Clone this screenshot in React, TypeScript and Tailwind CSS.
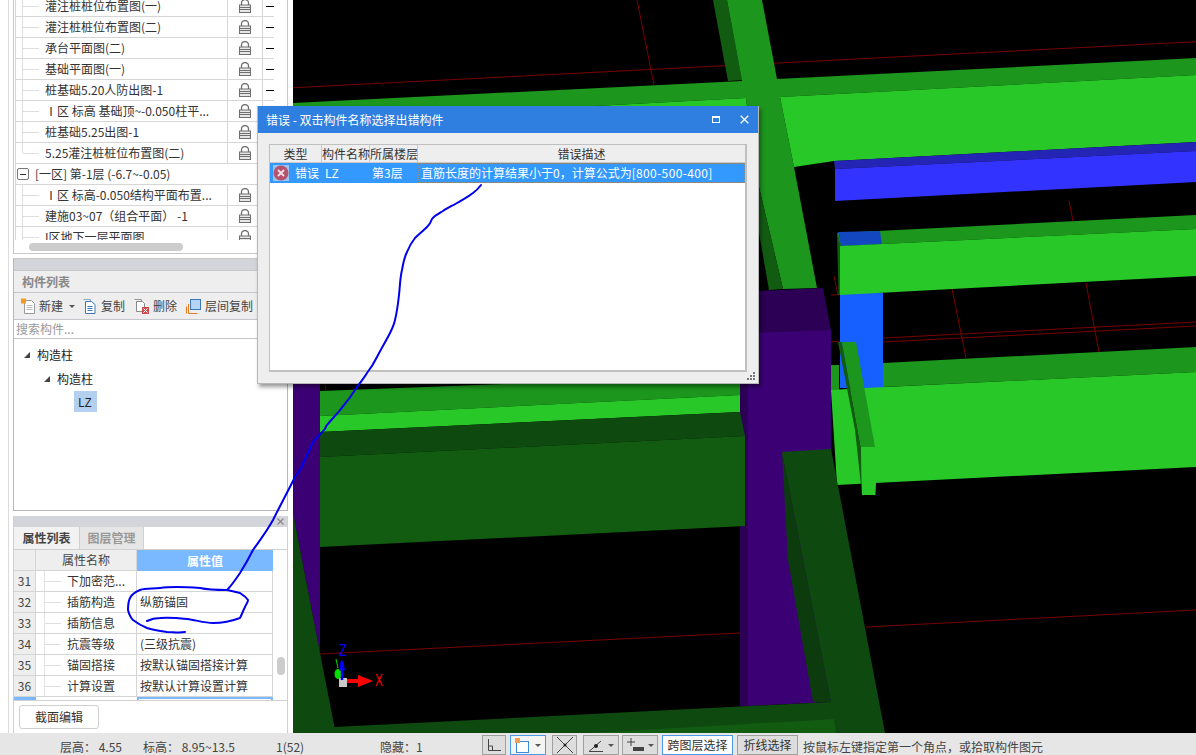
import React from "react";

const FONT = "font-['Noto_Sans_CJK_SC','Noto_Sans',sans-serif]";

const Lock = () => (
  <svg width="12" height="14" viewBox="0 0 12 14" fill="none">
    <path d="M2.500 6.500V4a3.500 3.500 0 0 1 7 0v2.500" stroke="#6f6f6f" strokeWidth="1.300" />
    <rect x="0.500" y="6" width="11" height="7.500" fill="#e6e6e6" stroke="#6f6f6f" />
    <path d="M1 8.500h10M1 10.500h10" stroke="#6f6f6f" />
  </svg>
);

const RomanOne = () => <span className="inline-block w-[12px] text-center">Ⅰ</span>;

const TreeRow = ({ text, roman, dash, last }: { text: string; roman?: boolean; dash?: boolean; last?: boolean }) => (
  <div className="flex h-[21px] w-[259px] shrink-0 items-stretch">
    <div className="flex w-[212px] items-center border-b border-l border-[#d6d6d6]">
      <div className={`${last ? "h-1/2 self-start" : "h-full"} w-[7px] border-r border-[#dedede]`} />
      <div className="h-px w-[16px] bg-[#dedede]" />
      <span className="ml-[6px] truncate whitespace-pre text-[12px] text-[#333]">
        {roman && <RomanOne />}
        {text}
      </span>
    </div>
    <div className="flex w-[35px] items-center justify-center border-b border-l border-[#d6d6d6]">
      <Lock />
    </div>
    <div className="flex w-[12px] items-center border-b border-l border-[#d6d6d6] pl-[3px]">
      {dash && <div className="h-px w-[8px] bg-black" />}
    </div>
  </div>
);

const PropRow = ({ n, name, value }: { n: number; name: string; value: string }) => (
  <div className="flex h-[21px] shrink-0 items-stretch text-[12px] text-[#333]">
    <div className="flex w-[22px] items-center justify-center border-b border-r border-[#d5d5d5] bg-[#eeeeee] text-[#444]">{n}</div>
    <div className="flex w-[101px] items-center border-b border-r border-[#d5d5d5]">
      <div className="h-full w-[9px] border-r border-[#e2e2e2]" />
      <div className="h-px w-[16px] bg-[#dedede]" />
      <span className="ml-[6px] whitespace-nowrap">{name}</span>
    </div>
    <div className="flex w-[136px] items-center border-b border-r border-[#d5d5d5] pl-[3px] whitespace-nowrap">{value}</div>
  </div>
);

const P = ({ d, c }: { d: string; c: string }) => <polygon points={d} fill={c} />;

const MID = "#1c961c";
const BRIGHT = "#28c828";
const DK = "#125c12";
const DK2 = "#0e4a0f";
const DK3 = "#0c3c0d";
const PURPLE = "#3c0075";
const PURPLE2 = "#2c0055";
const RED = "#7a0000";

const redLines = [
  [293, 87.7, 1196, 41.7],
  [637, 0, 654, 85],
  [1069, 201, 1073, 221],
  [1086, 283, 1099, 352],
  [952, 289, 966, 358],
  [883, 338, 1196, 322],
  [883, 342, 1196, 326],
  [834, 276, 838, 295],
  [831, 295, 840, 294.5],
  [831, 342, 840, 341],
  [320, 654, 740, 633],
  [866, 627, 1196, 610],
  [325, 384, 326, 390],
];

const Scene = () => (
  <svg width="903" height="733" viewBox="293 0 903 733" className="block bg-black">
    {redLines.map((l, i) => (
      <line key={i} x1={l[0]} y1={l[1]} x2={l[2]} y2={l[3]} stroke={RED} strokeWidth="1" />
    ))}
    {/* upper band + vertical beam */}
    <P d="713,0 727,0 742,80 728,81" c={DK} />
    <P d="727,0 762,0 777,79 1196,58 1196,75 780,97 794,167 817,288 783,289 759,187 746,98 595,106 293,106 293,103 742,81" c={MID} />
    <P d="595,106 746,98 747,106" c={BRIGHT} />
    <P d="759,187 783,289 769,290 759,233" c={DK} />
    <P d="780,97 1196,75 1196,142 834,161 794,167" c={BRIGHT} />
    {/* blue beam */}
    <P d="834,161 1196,142 1196,151 835,169" c="#2525b5" />
    <P d="835,169 1196,151 1196,182 835,201" c="#3333ff" />
    {/* blue column */}
    <P d="840,293 883,293 883,388 840,388" c="#1560ff" />
    {/* second beam */}
    <P d="837,233 1196,215 1196,229 840,246" c={MID} />
    <P d="838,232 880,231 882,244 841,246" c="#1247c0" />
    <P d="837,233 841,246 840,295 838.500,295" c={DK} />
    <P d="840,246 1196,229 1196,276 840,295" c={BRIGHT} />
    {/* right lower beam */}
    <P d="831,365 839,365 839,392 831,392" c={MID} />
    <P d="883,363 1196,347 1196,372 883,387" c={MID} />
    <P d="831,390 865,388 1196,372 1196,467 875,483 837,485" c={BRIGHT} />
    <P d="838,342 842,342 861,447 862,495 855,430" c={DK} />
    <P d="842,342 856,342 875,447 861,447" c={MID} />
    <P d="861,447 875,447 876,483 875.500,495 862,495" c={BRIGHT} />
    {/* purple */}
    <P d="759,291 823,288 831,330 759,333" c={PURPLE2} />
    <P d="748,333 831,330 831,702 748,706" c={PURPLE} />
    <P d="740,384 748,384 748,706 740,706" c={PURPLE2} />
    <P d="293,384 320,384 320,653 293,513" c={PURPLE} />
    {/* left beam */}
    <P d="320,391 740,375 740,395 320,416" c={MID} />
    <P d="320,416 740,395 740,412 320,432" c={BRIGHT} />
    <P d="320,432 740,412 745,436 320,457" c={DK2} />
    <P d="320,457 745,436 745,526 320,547" c={DK} />
    {/* bottom frame */}
    <P d="293,513 320,653 334.500,727 831,702 885,733 293,733" c={DK2} />
    <P d="590,733 836,719 836,733" c={DK} />
    <P d="782,452 831,449 885,733 836,733 831,702" c={DK2} />
    <P d="782,452 788,560 813,702 831,702" c={DK3} />
    {/* axis */}
    <rect x="339" y="678" width="8" height="9" fill="#c8c8c8" />
    <ellipse cx="338" cy="674" rx="3.500" ry="5" fill="#00e000" />
    <path d="M336 659l2 9" stroke="#00e000" strokeWidth="1" />
    <path d="M342 680V669M340.500 669l1.500-8 1.500 8z" stroke="#0000ff" strokeWidth="2.500" fill="#0000ff" />
    <path d="M347 681h13" stroke="#ff0000" strokeWidth="4" />
    <polygon points="358,675 373,681 358,687" fill="#ff0000" />
    <text x="339" y="656" fontSize="16" fill="#0000ff" fontFamily="Liberation Sans" textLength={8} lengthAdjust="spacingAndGlyphs">Z</text>
    <text x="375" y="686" fontSize="17" fill="#ff0000" fontFamily="Liberation Sans" textLength={8} lengthAdjust="spacingAndGlyphs">X</text>
  </svg>
);

const Ink = () => (
  <svg width="1196" height="755" className="pointer-events-none absolute left-0 top-0" fill="none" stroke="#0000f0" strokeWidth="2" strokeLinecap="round" strokeLinejoin="round">
    <path d="M481 185C478 189 476 191 473 193C468 197 462 200 457 203C452 206 447 208 443 211C438 214 434 216 432 219C431 222 429 225 427 227C423 231 419 234 415 238C411 243 409 247 407 252C404 258 403 264 402 270C400 278 400 286 399 295C398 304 397 312 395 320C394 325 392 329 390 333C386 341 381 349 377 357C374 363 371 368 367 373C364 378 360 383 357 387C352 395 346 403 340 410C336 415 331 420 327 425C325 427 326 429 323 431C320 435 316 438 313 442C311 446 310 449 308 453C305 459 303 464 300 470C298 473 297 474 295 477C288 491 280 506 273 520C267 531 260 540 253 550C249 558 245 565 240 573C236 579 232 585 227 590" />
    <path d="M147 621C151 619 155 618 160 618C169 617 178 618 187 619C196 620 204 623 213 623C222 623 232 621 240 618C242 614 243 611 245 607C246 604 248 603 248 600C246 597 243 595 240 593C236 592 232 591 227 590C218 590 209 590 200 588C187 587 173 586 160 588C153 589 146 588 140 590C135 592 132 594 130 598C128 602 128 606 128 610C129 614 130 617 133 620C137 623 142 626 147 628C153 630 160 631 167 632C173 632 179 633 185 632" />
  </svg>
);

const ErrorDialog = () => (
  <div className="absolute left-[257px] top-[106px] flex h-[278px] w-[502px] flex-col border-x border-b border-[#b8b8b8] bg-[#eeeeee] shadow-[2px_3px_4px_rgba(0,0,0,0.4)]">
    <div className="flex h-[27px] shrink-0 items-center bg-[#2e7fe0] pl-[8px] text-[12px] text-white">
      <span>错误 - 双击构件名称选择出错构件</span>
      <div className="ml-auto flex items-center gap-[20px] pr-[9px]">
        <div className="h-[7px] w-[8px] border border-t-2 border-white" />
        <svg width="9" height="9" viewBox="0 0 9 9"><path d="M.7.700l7.600 7.600M8.300.700L.7 8.300" stroke="#fff" strokeWidth="1.300" /></svg>
      </div>
    </div>
    <div className="ml-[11px] mt-[11px] flex h-[228px] w-[478px] flex-col border border-b-2 border-r-2 border-[#c0c0c0] bg-white text-[12px]">
      <div className="flex h-[18px] shrink-0 items-center border-b border-[#c8c8c8] bg-[#eeeeee] text-[#333]">
        <div className="w-[52px] border-r border-[#c8c8c8] text-center">类型</div>
        <div className="w-[48px] border-r border-[#c8c8c8] text-center whitespace-nowrap">构件名称</div>
        <div className="w-[48px] border-r border-[#c8c8c8] text-center whitespace-nowrap">所属楼层</div>
        <div className="flex-1 text-center">错误描述</div>
      </div>
      <div className="flex h-[20px] shrink-0 items-center bg-[#3399ff] text-white">
        <div className="flex w-[52px] items-center pl-[3px]">
          <svg width="16" height="16" viewBox="0 0 16 16" className="shrink-0">
            <rect width="16" height="16" fill="#9cc4ee" />
            <circle cx="8" cy="8" r="7.500" fill="#b5536f" />
            <path d="M5 5l6 6M11 5l-6 6" stroke="#f3dfe4" strokeWidth="1.800" />
          </svg>
          <span className="ml-[6px] whitespace-nowrap">错误</span>
        </div>
        <div className="w-[48px] pl-[3px]">LZ</div>
        <div className="w-[48px] pl-[2px]">第3层</div>
        <div className="flex h-full flex-1 items-center border border-dotted border-[#8f8a80] pl-[2px] whitespace-nowrap">
          直筋长度的计算结果小于0，计算公式为<span className="tracking-[0.35px]">[800-500-400]</span>
        </div>
      </div>
    </div>
    <svg width="9" height="9" viewBox="0 0 9 9" className="absolute bottom-[2px] right-[2px]" fill="#777">
      <rect x="6" y="0" width="2" height="2" /><rect x="3" y="3" width="2" height="2" /><rect x="6" y="3" width="2" height="2" />
      <rect x="0" y="6" width="2" height="2" /><rect x="3" y="6" width="2" height="2" /><rect x="6" y="6" width="2" height="2" />
    </svg>
  </div>
);

const Caret = () => <span className="h-0 w-0 border-x-[3px] border-t-[3px] border-x-transparent border-t-[#555]" />;

const Toolbar = () => (
  <div className="flex h-[27px] shrink-0 items-center border-b border-[#c4c8cc] bg-[#eeeeee] pl-[6px] text-[12px] text-[#444]">
    <svg width="16" height="16" viewBox="0 0 16 16" fill="none" className="shrink-0">
      <path d="M4.500 2.500h7l3 3v10h-10z" fill="#fff" stroke="#9a9a9a" />
      <path d="M6.500 7.500h6M6.500 9.500h6M6.500 11.500h6" stroke="#bbb" />
      <rect x="1" y="0.500" width="5" height="5" fill="#f59a23" />
    </svg>
    <span className="ml-[3px]">新建</span>
    <span className="ml-[6px] flex"><Caret /></span>
    <svg width="13" height="15" viewBox="0 0 13 15" fill="none" className="ml-[8px] shrink-0">
      <path d="M.5.5h7v2" stroke="#8aa8c8" />
      <path d="M2.500 2.500h6l3.500 3v9h-9.500z" fill="#fff" stroke="#3c78b8" />
      <path d="M4.500 7.500h5M4.500 9.500h5M4.500 11.500h5" stroke="#3c78b8" />
    </svg>
    <span className="ml-[5px]">复制</span>
    <svg width="15" height="15" viewBox="0 0 15 15" fill="none" className="ml-[9px] shrink-0">
      <path d="M.5.500h7v1.500" stroke="#999" />
      <path d="M2.500 2.500h6l2 2v8h-8z" fill="#fff" stroke="#888" />
      <rect x="8" y="8" width="7" height="7" fill="#d24a4a" />
      <path d="M9.500 9.500l4 4M13.500 9.500l-4 4" stroke="#fff" />
    </svg>
    <span className="ml-[4px]">删除</span>
    <svg width="15" height="15" viewBox="0 0 15 15" fill="none" className="ml-[9px] shrink-0">
      <path d="M2.500 5v9.500h9M.5 7.500v7" stroke="#e87a20" />
      <rect x="4.500" y="0.500" width="10" height="10" fill="#b3d4f5" stroke="#3c78b8" />
    </svg>
    <span className="ml-[4px] whitespace-nowrap">层间复制</span>
  </div>
);

const SB = ({ children, cls }: { children: React.ReactNode; cls: string }) => (
  <div className={`flex h-[20px] items-center justify-center border bg-[#dddddd] ${cls}`}>{children}</div>
);

const tree1: [string, boolean, boolean][] = [
  ["灌注桩桩位布置图(一)", true, false], ["灌注桩桩位布置图(二)", true, false], ["承台平面图(二)", true, false], ["基础平面图(一)", true, false],
  ["桩基础5.20人防出图-1", true, false], ["区 标高 基础顶~-0.050柱平...", false, true], ["桩基础5.25出图-1", false, false], ["5.25灌注桩桩位布置图(二)", false, false],
];

export default function App() {
  return (
    <div className={`relative flex h-[755px] w-[1196px] flex-col overflow-hidden bg-white ${FONT}`}>
      <div className="flex h-[733px] shrink-0">
        <div className="flex h-full w-[293px] shrink-0 pl-[8px]">
          <div className="flex h-full w-full flex-col border-l border-[#dcdcdc] pl-[4px] pr-[5px]">
            {/* drawing tree */}
            <div className="relative flex h-[254px] shrink-0 flex-col overflow-hidden border-b border-l border-r border-[#c8c8c8] pl-[1px]">
              <div className="flex h-[240px] shrink-0 flex-col overflow-hidden">
                <div className="-mt-[4px] flex flex-col">
                  {tree1.map(([t, d, r], i) => <TreeRow key={t} text={t} dash={d} roman={r} last={i === 7} />)}
                  <div className="flex h-[21px] w-[259px] shrink-0 items-center border-b border-l border-[#d6d6d6] text-[12px] text-[#333]">
                    <div className="ml-[1px] flex h-[12px] w-[12px] items-center justify-center rounded-[2px] border border-[#777]">
                      <div className="h-px w-[6px] bg-[#333]" />
                    </div>
                    <span className="ml-[6px] whitespace-nowrap">[一区] 第-1层 (-6.7~-0.05)</span>
                  </div>
                  <TreeRow text="区 标高-0.050结构平面布置..." roman />
                  <TreeRow text="建施03~07（组合平面） -1" />
                  <TreeRow text="I区地下一层平面图" />
                </div>
              </div>
              <div className="ml-[14px] mt-[3px] h-[8px] w-[154px] rounded-full bg-[#cccccc]" />
            </div>
            <div className="h-[4px] shrink-0" />
            {/* component list */}
            <div className="flex h-[253px] shrink-0 flex-col border border-[#b4b8bc] border-t-[#c8c8c8]">
              <div className="h-[12px] shrink-0 border-b border-[#c4c8cc] bg-[#d3d5da]" />
              <div className="flex h-[22px] shrink-0 items-center border-b border-[#c4c8cc] bg-[#eeeeee] pl-[8px] text-[12px] font-bold text-[#888]">构件列表</div>
              <Toolbar />
              <div className="flex h-[19px] shrink-0 items-center border-b border-[#c4c8cc] bg-white pl-[2px] text-[12px] text-[#999]">搜索构件...</div>
              <div className="relative flex-1 bg-white pt-[4px] text-[12px] text-[#222]">
                <div className="flex h-[24px] items-center pl-[10px]">
                  <span className="h-0 w-0 border-b-[6px] border-l-[6px] border-b-[#444] border-l-transparent" />
                  <span className="ml-[7px]">构造柱</span>
                </div>
                <div className="flex h-[24px] items-center pl-[30px]">
                  <span className="h-0 w-0 border-b-[6px] border-l-[6px] border-b-[#444] border-l-transparent" />
                  <span className="ml-[7px]">构造柱</span>
                </div>
                <div className="ml-[60px] flex h-[21px] w-[23px] items-center bg-[#b3d0f0] pl-[4px]">LZ</div>
              </div>
            </div>
            <div className="h-[5px] shrink-0" />
            {/* properties */}
            <div className="flex min-h-0 flex-1 flex-col border-x border-[#d0d0d0]">
              <div className="flex h-[11px] shrink-0 items-center justify-end bg-[#d3d5da] pr-[3px]">
                <svg width="7" height="7" viewBox="0 0 7 7"><path d="M.5.500l6 6M6.500.500l-6 6" stroke="#888" strokeWidth="1.200" /></svg>
              </div>
              <div className="flex h-[23px] shrink-0 items-stretch border-b border-[#d0d0d0] text-[12px]">
                <div className="flex w-[65px] items-center justify-center bg-[#f2f2f2] font-bold text-[#444]">属性列表</div>
                <div className="flex w-[65px] items-center justify-center border-x border-[#d0d0d0] bg-[#e6e6e6] font-bold text-[#999]">图层管理</div>
              </div>
              <div className="relative flex h-[151px] shrink-0 flex-col overflow-hidden border-b border-[#d0d0d0]">
                <div className="flex h-[21px] shrink-0 text-[12px]">
                  <div className="w-[22px] border-b border-r border-[#d5d5d5] bg-[#eeeeee]" />
                  <div className="flex w-[101px] items-center justify-center border-b border-r border-[#d5d5d5] bg-[#eeeeee] text-[#444]">属性名称</div>
                  <div className="flex w-[136px] items-center justify-center bg-[#7ab8ff] font-bold text-white">属性值</div>
                </div>
                <PropRow n={31} name="下加密范..." value="" />
                <PropRow n={32} name="插筋构造" value="纵筋锚固" />
                <PropRow n={33} name="插筋信息" value="" />
                <PropRow n={34} name="抗震等级" value="(三级抗震)" />
                <PropRow n={35} name="锚固搭接" value="按默认锚固搭接计算" />
                <PropRow n={36} name="计算设置" value="按默认计算设置计算" />
                <div className="flex h-[5px] shrink-0">
                  <div className="w-[22px] border-t-2 border-[#7ab8ff] bg-[#7ab8ff]" />
                  <div className="w-[101px]" />
                  <div className="w-[136px] border-x-2 border-t-2 border-[#7ab8ff]" />
                </div>
                <div className="absolute right-[2px] top-[107px] h-[18px] w-[8px] rounded-full bg-[#cccccc]" />
              </div>
              <div className="pl-[5px] pt-[4px]">
                <div className="flex h-[24px] w-[80px] items-center justify-center rounded-[3px] border border-[#cfcfcf] bg-white text-[12px] text-[#333]">截面编辑</div>
              </div>
            </div>
          </div>
        </div>
        <Scene />
      </div>
      {/* status bar */}
      <div className="flex min-h-0 flex-1 items-end bg-[#e6e6e6] pl-[60px] text-[12px] text-[#444]">
        <div className="flex h-[20px] items-center whitespace-pre">
          <span className="w-[83px] pt-[3px]">层高： 4.55</span>
          <span className="w-[133px] pt-[3px]">标高： 8.95~13.5</span>
          <span className="w-[104px] pt-[3px]">1(52)</span>
          <span className="w-[102px] pt-[3px]">隐藏：1</span>
          <SB cls="w-[24px] border-[#a0a0a0]">
            <svg width="14" height="12" viewBox="0 0 14 12" fill="none"><path d="M1.500 0v11.500H14M1.500 7h4v4.500" stroke="#444" /></svg>
          </SB>
          <SB cls="ml-[4px] w-[36px] gap-[6px] border-[#4a9ae8] bg-[#f4f4f4]">
            <svg width="14" height="15" viewBox="0 0 14 15" fill="none"><rect x="1.500" y="3.500" width="12" height="11" stroke="#3c8ad8" fill="#fff" /><rect x="0" y="0" width="5" height="5" fill="#f5a050" /></svg>
            <Caret />
          </SB>
          <SB cls="ml-[6px] w-[25px] border-[#a0a0a0]">
            <svg width="18" height="16" viewBox="0 0 18 16" fill="none"><path d="M1 0l16 16M17 0L1 16" stroke="#444" /><circle cx="9" cy="8" r="1.500" fill="#222" /></svg>
          </SB>
          <SB cls="ml-[6px] w-[36px] gap-[4px] border-[#a0a0a0]">
            <svg width="16" height="14" viewBox="0 0 16 14" fill="none"><path d="M1 13.500h14M1 13.500L13 3" stroke="#444" /><circle cx="8" cy="8" r="2" fill="#222" /></svg>
            <Caret />
          </SB>
          <SB cls="ml-[3px] w-[36px] gap-[3px] border-[#a0a0a0]">
            <svg width="18" height="14" viewBox="0 0 18 14" fill="none"><path d="M4 0v8M0 4h8" stroke="#444" /><rect x="6" y="9" width="11" height="4" fill="#444" /></svg>
            <Caret />
          </SB>
          <SB cls="ml-[4px] w-[71px] border-[#4a9ae8] bg-white text-[#333]">跨图层选择</SB>
          <SB cls="ml-[4px] w-[61px] border-[#a0a0a0] text-[#333]">折线选择</SB>
          <span className="ml-[5px] pt-[3px]">按鼠标左键指定第一个角点，或拾取构件图元</span>
        </div>
      </div>
      <ErrorDialog />
      <Ink />
    </div>
  );
}
